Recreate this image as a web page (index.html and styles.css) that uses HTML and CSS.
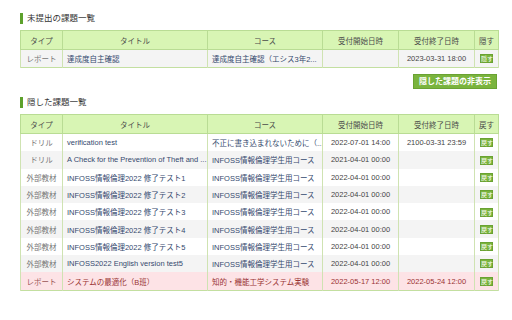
FILE: index.html
```html
<!DOCTYPE html>
<html lang="ja">
<head>
<meta charset="utf-8">
<link rel="stylesheet" href="styles.css">
</head>
<body>
<div class="page">
  <h2 class="heading">未提出の課題一覧</h2>
  <table class="list">
    <colgroup>
      <col class="c-type"><col class="c-title"><col class="c-course"><col class="c-date"><col class="c-date"><col class="c-btn">
    </colgroup>
    <thead>
      <tr class="head-row"><th>タイプ</th><th>タイトル</th><th>コース</th><th>受付開始日時</th><th>受付終了日時</th><th>隠す</th></tr>
    </thead>
    <tbody>
      <tr class="row1 grey"><td class="type">レポート</td><td class="title">達成度自主確認</td><td class="title">達成度自主確認（エシス3年2...</td><td class="date"></td><td class="date">2023-03-31 18:00</td><td class="btn-cell"><span class="mini">隠す</span></td></tr>
    </tbody>
  </table>
  <div class="actions"><span class="big-btn">隠した課題の非表示</span></div>

  <h2 class="heading second">隠した課題一覧</h2>
  <table class="list">
    <colgroup>
      <col class="c-type"><col class="c-title"><col class="c-course"><col class="c-date"><col class="c-date"><col class="c-btn">
    </colgroup>
    <thead>
      <tr class="head-row"><th>タイプ</th><th>タイトル</th><th>コース</th><th>受付開始日時</th><th>受付終了日時</th><th>戻す</th></tr>
    </thead>
    <tbody>
      <tr><td class="type">ドリル</td><td class="title">verification test</td><td class="title">不正に書き込まれないために（...</td><td class="date">2022-07-01 14:00</td><td class="date">2100-03-31 23:59</td><td class="btn-cell"><span class="mini">戻す</span></td></tr>
      <tr class="grey"><td class="type">ドリル</td><td class="title">A Check for the Prevention of Theft and ...</td><td class="title">INFOSS情報倫理学生用コース</td><td class="date">2021-04-01 00:00</td><td class="date"></td><td class="btn-cell"><span class="mini">戻す</span></td></tr>
      <tr><td class="type">外部教材</td><td class="title">INFOSS情報倫理2022 修了テスト1</td><td class="title">INFOSS情報倫理学生用コース</td><td class="date">2022-04-01 00:00</td><td class="date"></td><td class="btn-cell"><span class="mini">戻す</span></td></tr>
      <tr class="grey"><td class="type">外部教材</td><td class="title">INFOSS情報倫理2022 修了テスト2</td><td class="title">INFOSS情報倫理学生用コース</td><td class="date">2022-04-01 00:00</td><td class="date"></td><td class="btn-cell"><span class="mini">戻す</span></td></tr>
      <tr><td class="type">外部教材</td><td class="title">INFOSS情報倫理2022 修了テスト3</td><td class="title">INFOSS情報倫理学生用コース</td><td class="date">2022-04-01 00:00</td><td class="date"></td><td class="btn-cell"><span class="mini">戻す</span></td></tr>
      <tr class="grey"><td class="type">外部教材</td><td class="title">INFOSS情報倫理2022 修了テスト4</td><td class="title">INFOSS情報倫理学生用コース</td><td class="date">2022-04-01 00:00</td><td class="date"></td><td class="btn-cell"><span class="mini">戻す</span></td></tr>
      <tr><td class="type">外部教材</td><td class="title">INFOSS情報倫理2022 修了テスト5</td><td class="title">INFOSS情報倫理学生用コース</td><td class="date">2022-04-01 00:00</td><td class="date"></td><td class="btn-cell"><span class="mini">戻す</span></td></tr>
      <tr class="grey"><td class="type">外部教材</td><td class="title">INFOSS2022 English version test5</td><td class="title">INFOSS情報倫理学生用コース</td><td class="date">2022-04-01 00:00</td><td class="date"></td><td class="btn-cell"><span class="mini">戻す</span></td></tr>
      <tr class="pink"><td class="type">レポート</td><td class="title">システムの最適化（B班）</td><td class="title">知的・機能工学システム実験</td><td class="date">2022-05-17 12:00</td><td class="date">2022-05-24 12:00</td><td class="btn-cell"><span class="mini">戻す</span></td></tr>
    </tbody>
  </table>
</div>
</body>
</html>
```
FILE: styles.css
```css
html, body {
  margin: 0;
  padding: 0;
  background: #ffffff;
  font-family: "Liberation Sans", "Noto Sans CJK JP", sans-serif;
  color: #333333;
}
.page {
  padding: 13px 14px 0 20px;
}
.heading {
  margin: 0 0 6px 0;
  border-left: 3px solid #5da12c;
  padding-left: 4px;
  font-size: 8.5px;
  line-height: 11px;
  height: 11px;
  font-weight: normal;
  color: #333333;
}
.heading.second {
  margin-top: 8px;
}
.list {
  width: 478px;
  border-collapse: collapse;
  table-layout: fixed;
  font-size: 7.5px;
  border: 1px solid #c3dfa0;
}
.c-type { width: 42px; }
.c-title { width: 145px; }
.c-course { width: 115px; }
.c-date { width: 76px; }
.c-btn { width: 24px; }
.head-row th {
  background: #d8f5b4;
  height: 18px;
  padding: 0;
  font-weight: normal;
  color: #4a4a4a;
  border: 1px solid #b9dc94;
  text-align: center;
}
.list td {
  height: 17.3px;
  padding: 0 4px;
  white-space: nowrap;
  overflow: hidden;
  border-left: 1px solid #cfe3b2;
  border-right: 1px solid #cfe3b2;
  background: #ffffff;
}
.list tr.row1 td {
  height: 17px;
}
.list tr.grey td {
  background: #f4f4f4;
}
.list tr.pink td {
  background: #fde3e6;
  color: #9a3333;
}
.list td.type {
  text-align: center;
  color: #777777;
}
.list tr.pink td.type {
  color: #9a5555;
}
.list td.title {
  color: #34496e;
}
.list tr.pink td.title {
  color: #993333;
}
.list td.date {
  text-align: center;
  color: #444444;
}
.list td.btn-cell {
  text-align: center;
  padding: 0;
}
.mini {
  display: inline-block;
  background: #7ab43d;
  color: #ffffff;
  font-size: 6px;
  line-height: 9px;
  width: 13px;
  height: 9px;
  vertical-align: middle;
  border: 1px solid #6aa232;
  box-sizing: border-box;
}
.actions {
  display: flex;
  justify-content: flex-end;
  margin-top: 6px;
  padding-right: 1px;
}
.big-btn {
  display: block;
  width: 84px;
  height: 15px;
  box-sizing: border-box;
  background: #7ab43d;
  border: 1px solid #6aa232;
  color: #ffffff;
  font-size: 8px;
  font-weight: bold;
  line-height: 13px;
  text-align: center;
}
```
